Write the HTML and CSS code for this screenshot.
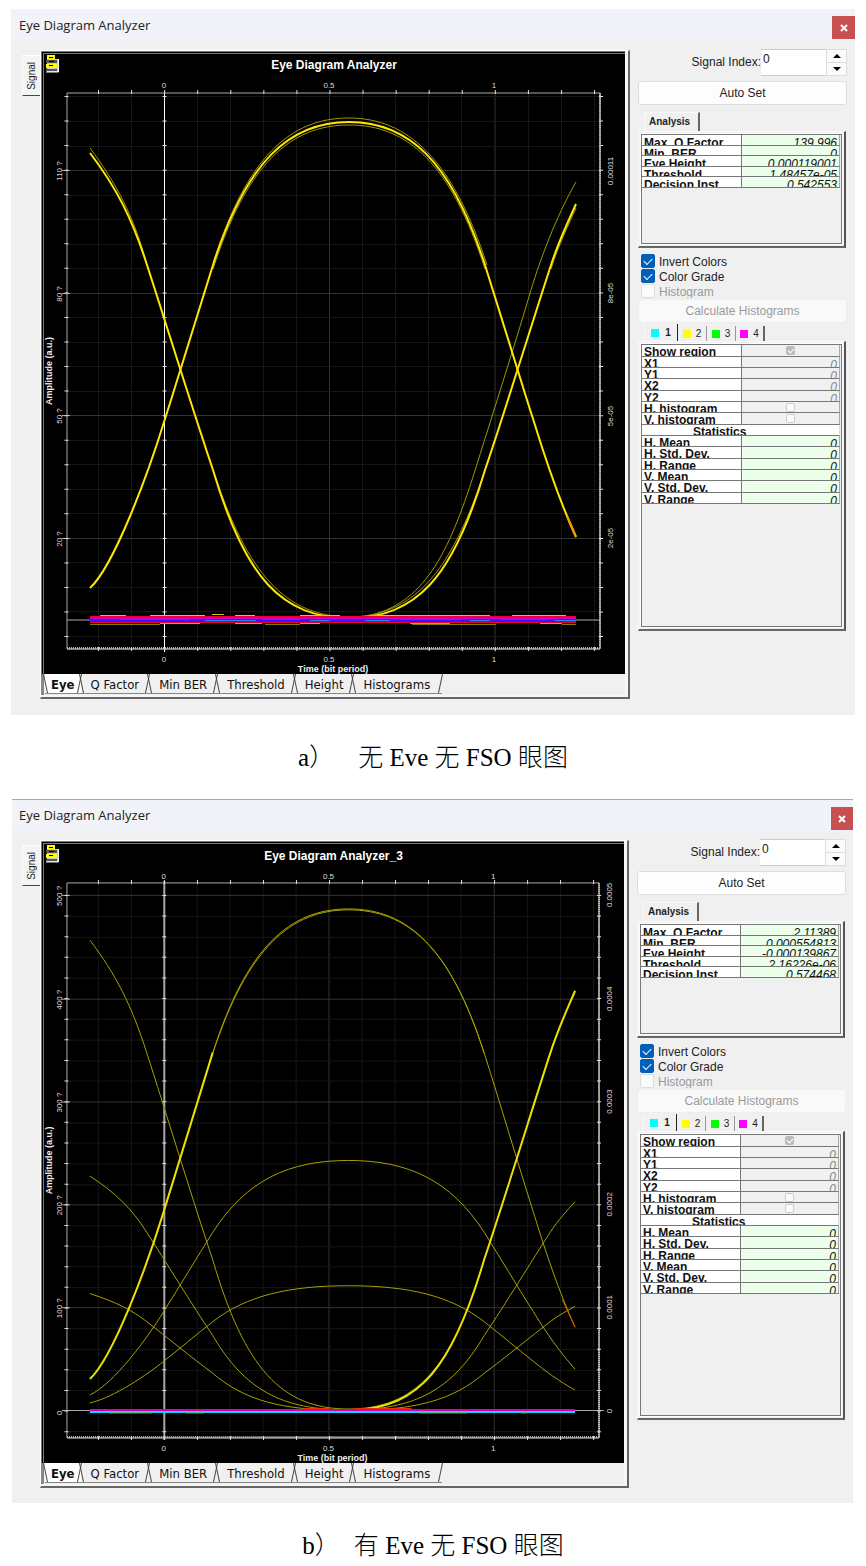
FILE: index.html
```html
<!DOCTYPE html>
<html lang="zh">
<head>
<meta charset="utf-8">
<title>Eye Diagram Analyzer</title>
<link rel="stylesheet" href="styles.css">
</head>
<body>
<main class="page">

<section class="window">
  <header class="titlebar">
    <h1 class="titlebar-text">Eye Diagram Analyzer</h1>
    <button class="close" aria-label="Close"><svg width="8" height="8" viewBox="0 0 8 8"><path d="M1 1L7 7M7 1L1 7" stroke="#fff" stroke-width="2"/></svg></button>
  </header>
  <div class="content">
    <button class="side-tab"><span class="side-tab-text">Signal</span></button>
    <div class="chart-panel">
      <div class="screen">
        <svg class="chart" viewBox="44 54 581 620">
          <defs>
            <path id="rise" d="M90 588C114 566 148 474 164 422C181 369 197 315 213 265C247 160 290 122 349 122C408 122 451 160 485 265C501 315 517 369 534 422C546 461 560 502 576 537"/>
            <path id="fall" d="M90 153C116 187 132 218 147 265C164 317 193 411 213 470C245 578 282 618 349 618C416 618 453 578 485 470C505 411 534 317 551 265C559 240 568 222 576 204"/>
            <g id="logo">
              <path d="M47 56h8v3h3v13H47z" fill="#ccc"/>
              <path d="M47 55h8v4h-8zM46 64h11v4H46z" fill="#ff0"/>
              <path d="M46 60h11v3H46zM46 69h11v2H46z" fill="#555"/>
              <path d="M49 57.500h4M49 65.500h4M49 61.500h5" stroke="#000"/>
              <path d="M58.500 59v13H46" stroke="#fff" fill="none"/>
            </g>
            <g id="columns">
              <path class="minor" d="M98.500 93V649M131.500 93V649M197.500 93V649M230.500 93V649M263.500 93V649M296.500 93V649M362.500 93V649M395.500 93V649M428.500 93V649M461.500 93V649M528.500 93V649M561.500 93V649M594.500 93V649"/>
              <path class="major" d="M329.500 93V652M495 93V652"/>
            </g>
          </defs>
          <rect x="44" y="54" width="581" height="620" fill="#000"/>
          <use href="#logo"/>
          <text class="chart-title" x="334" y="69">Eye Diagram Analyzer</text>
          <use href="#columns"/>
          <path class="minor" d="M67 96.500H600M67 121.500H600M67 146.500H600M67 195.500H600M67 219.500H600M67 244.500H600M67 268.500H600M67 317.500H600M67 342.500H600M67 366.500H600M67 391.500H600M67 440.500H600M67 464.500H600M67 489.500H600M67 513.500H600M67 562.500H600M67 587.500H600M67 611.500H600M67 636.500H600"/>
          <path class="major" d="M67 170.500H600M67 293.500H600M67 415.500H600M67 538.500H600"/>
          <path class="axis" d="M67 93H600"/>
          <path class="axis" d="M67 93V649M62 170.500H70M62 293.500H70M62 415.500H70M62 538.500H70M600 620H67"/>
          <path class="frame" d="M600 93V649H67M164.500 91V652"/>
          <path class="dots" d="M600 93V649M67 648H600"/>
          <path class="ticks" stroke-dasharray="1 23.550" d="M66.500 96V649M164.500 96V649M601 96V649"/>
          <path class="ticks" stroke-dasharray="1 32.070" d="M98 92H600M98 649H600"/>
          <g class="num">
            <text x="164" y="88">0</text><text x="329" y="88">0.5</text><text x="494" y="88">1</text>
            <text x="164" y="662">0</text><text x="329" y="662">0.5</text><text x="494" y="662">1</text>
            <text transform="translate(62 171) rotate(-90)">110 ?</text>
            <text transform="translate(62 294) rotate(-90)">80 ?</text>
            <text transform="translate(62 416) rotate(-90)">50 ?</text>
            <text transform="translate(62 539) rotate(-90)">20 ?</text>
            <text transform="translate(613 171) rotate(-90)">0.00011</text>
            <text transform="translate(613 293) rotate(-90)">8e-05</text>
            <text transform="translate(613 416) rotate(-90)">5e-05</text>
            <text transform="translate(613 538) rotate(-90)">2e-05</text>
          </g>
          <text class="axis-title" x="333" y="672">Time (bit period)</text>
          <text class="axis-title" transform="translate(52 371) rotate(-90)">Amplitude (a.u.)</text>
          <g fill="none">
            <path class="trace-dim" d="M213 269C247 164 290 125 349 125C408 125 451 164 485 269"/>
            <path class="trace-dim" d="M213 263C247 157 290 118 349 118C408 118 453 160 487 265"/>
            <path class="trace-dim" d="M90 148C116 183 134 216 147 265"/>
            <path class="trace-dim" d="M213 470C248 576 286 616 349 617C412 616 450 576 485 470M551 269C559 244 568 226 576 208"/>
            <path class="trace-dim" d="M361 617C420 608 446 560 472 480C494 410 520 328 530 293C544 247 560 210 576 182"/>
            <use href="#rise" class="trace-hot"/>
            <use href="#fall" class="trace-hot"/>
            <path stroke="#f5a000" stroke-width="2" d="M567 516L576 537"/>
          </g>
          <path stroke="#cc0" d="M100 615.500H126M212 614.500H224M300 615.500H340M400 615.500H490M512 615.500H566"/>
          <path stroke="#f00030" stroke-width="2" d="M90 617H576"/>
          <path stroke="#f0c000" d="M150 615.500H205M235 615.500H255M372 615.500H406M440 615.500H460"/>
          <path stroke="#d000d8" stroke-width="2" d="M90 619H576"/>
          <path stroke="#3018ff" stroke-width="3" d="M90 620.500H576"/>
          <path stroke="#9010ff" d="M120 619.500H190M262 619.500H300M400 619.500H462M500 619.500H548"/>
          <path stroke="#1090ff" d="M205 620.500H256M310 620.500H330M365 620.500H390M470 620.500H490M555 620.500H576"/>
          <path stroke="#f00030" d="M90 622.500H576"/>
          <path stroke="#f0a000" d="M160 623.500H200M235 623.500H262M300 623.500H320M410 623.500H450M540 623.500H562"/>
          <path stroke="#807800" d="M90 624.500H160M265 624.500H300M412 624.500H496M562 624.500H576"/>
        </svg>
      </div>
      <nav class="sheet-tabs">
        <button class="sheet active">Eye</button><button class="sheet">Q Factor</button><button class="sheet">Min BER</button><button class="sheet">Threshold</button><button class="sheet">Height</button><button class="sheet">Histograms</button>
      </nav>
    </div>
    <aside class="sidebar">
      <div class="index-row">
        <label for="index-a">Signal Index:</label>
        <input class="index-input" id="index-a" type="text" value="0">
        <div class="spinner"><button class="spin" aria-label="Up"><svg width="8" height="4" viewBox="0 0 8 4"><path d="M0 4L4 0L8 4z"/></svg></button><button class="spin" aria-label="Down"><svg width="8" height="4" viewBox="0 0 8 4"><path d="M0 0L4 4L8 0z"/></svg></button></div>
      </div>
      <button class="btn auto">Auto Set</button>
      <div class="analysis-tabs"><button class="analysis-tab">Analysis</button></div>
      <div class="panel results">
        <div class="well">
          <table class="grid results-grid">
            <tr><th><div>Max. Q Factor</div></th><td><div>139.996</div></td></tr>
            <tr><th><div>Min. BER</div></th><td><div>0</div></td></tr>
            <tr><th><div>Eye Height</div></th><td><div>0.000119001</div></td></tr>
            <tr><th><div>Threshold</div></th><td><div>1.48457e-05</div></td></tr>
            <tr><th><div>Decision Inst</div></th><td><div>0.542553</div></td></tr>
          </table>
        </div>
      </div>
      <div class="checks">
        <label class="check"><input type="checkbox" checked>Invert Colors</label>
        <label class="check"><input type="checkbox" checked>Color Grade</label>
        <label class="check off"><input type="checkbox" disabled>Histogram</label>
      </div>
      <button class="btn calc" disabled>Calculate Histograms</button>
      <div class="region-tabs">
        <button class="region active"><i class="swatch cyan"></i>1</button><button class="region"><i class="swatch yellow"></i>2</button><button class="region"><i class="swatch green"></i>3</button><button class="region"><i class="swatch magenta"></i>4</button>
      </div>
      <div class="panel regions">
        <div class="well">
          <table class="grid stats-grid">
            <tr class="dead"><th><div>Show region</div></th><td><div class="mid"><input type="checkbox" aria-label="Show region" checked disabled></div></td></tr>
            <tr class="dead"><th><div>X1</div></th><td><div>0</div></td></tr>
            <tr class="dead"><th><div>Y1</div></th><td><div>0</div></td></tr>
            <tr class="dead"><th><div>X2</div></th><td><div>0</div></td></tr>
            <tr class="dead"><th><div>Y2</div></th><td><div>0</div></td></tr>
            <tr class="dead"><th><div>H. histogram</div></th><td><div class="mid"><input type="checkbox" aria-label="H. histogram" disabled></div></td></tr>
            <tr class="dead"><th><div>V. histogram</div></th><td><div class="mid"><input type="checkbox" aria-label="V. histogram" disabled></div></td></tr>
            <tr><th class="heading" colspan="2"><div>Statistics</div></th></tr>
            <tr><th><div>H. Mean</div></th><td><div>0</div></td></tr>
            <tr><th><div>H. Std. Dev.</div></th><td><div>0</div></td></tr>
            <tr><th><div>H. Range</div></th><td><div>0</div></td></tr>
            <tr><th><div>V. Mean</div></th><td><div>0</div></td></tr>
            <tr><th><div>V. Std. Dev.</div></th><td><div>0</div></td></tr>
            <tr><th><div>V. Range</div></th><td><div>0</div></td></tr>
          </table>
        </div>
      </div>
    </aside>
  </div>
</section>
<p class="caption first"><span>a<span class="han">）</span></span><span><span class="han">无</span> Eve <span class="han">无</span> FSO <span class="han">眼图</span></span></p>

<section class="window second">
  <header class="titlebar">
    <h1 class="titlebar-text">Eye Diagram Analyzer</h1>
    <button class="close" aria-label="Close"><svg width="8" height="8" viewBox="0 0 8 8"><path d="M1 1L7 7M7 1L1 7" stroke="#fff" stroke-width="2"/></svg></button>
  </header>
  <div class="content">
    <button class="side-tab"><span class="side-tab-text">Signal</span></button>
    <div class="chart-panel">
      <div class="screen">
        <svg class="chart" viewBox="44 54 581 620">
          <rect x="44" y="54" width="581" height="620" fill="#000"/>
          <use href="#logo"/>
          <text class="chart-title" x="334" y="70">Eye Diagram Analyzer_3</text>
          <use href="#columns"/>
          <path class="minor" d="M67 126.500H600M67 147.500H600M67 167.500H600M67 188.500H600M67 229.500H600M67 250.500H600M67 271.500H600M67 291.500H600M67 333.500H600M67 353.500H600M67 374.500H600M67 395.500H600M67 436.500H600M67 457.500H600M67 477.500H600M67 498.500H600M67 539.500H600M67 560.500H600M67 581.500H600M67 601.500H600M67 642.500H600"/>
          <path class="major" d="M67 105.500H600M67 209.500H600M67 312.500H600M67 415.500H600M67 518.500H600"/>
          <path class="axis" d="M67 93H600"/>
          <path class="axis" d="M67 93V649M62 105.500H70M62 209.500H70M62 312.500H70M62 415.500H70M62 518.500H70M62 621.500H605"/>
          <path class="frame" d="M600 93V649H67"/>
          <path class="axis" stroke-width="2" d="M164.500 91V651"/>
          <path class="dots" d="M600 93V649M67 648H600"/>
          <path class="ticks" stroke-dasharray="1 19.660" d="M66.500 105V648M164.500 105V648M600 105V648"/>
          <path class="ticks" stroke-dasharray="1 32.070" d="M98 92H600M98 649H600"/>
          <g class="num">
            <text x="164" y="89">0</text><text x="329" y="89">0.5</text><text x="494" y="89">1</text>
            <text x="164" y="662">0</text><text x="329" y="662">0.5</text><text x="494" y="662">1</text>
            <text transform="translate(62 106) rotate(-90)">500 ?</text>
            <text transform="translate(62 210) rotate(-90)">400 ?</text>
            <text transform="translate(62 313) rotate(-90)">300 ?</text>
            <text transform="translate(62 416) rotate(-90)">200 ?</text>
            <text transform="translate(62 519) rotate(-90)">100 ?</text>
            <text transform="translate(62 624) rotate(-90)">0</text>
            <text transform="translate(613 105) rotate(-90)">0.0005</text>
            <text transform="translate(613 209) rotate(-90)">0.0004</text>
            <text transform="translate(613 312) rotate(-90)">0.0003</text>
            <text transform="translate(613 415) rotate(-90)">0.0002</text>
            <text transform="translate(613 518) rotate(-90)">0.0001</text>
            <text transform="translate(613 622) rotate(-90)">0</text>
          </g>
          <text class="axis-title" x="333" y="672">Time (bit period)</text>
          <text class="axis-title" transform="translate(52 371) rotate(-90)">Amplitude (a.u.)</text>
          <g fill="none">
            <use href="#rise" class="trace-thin" transform="translate(0 622) scale(1 .252) translate(0 -620)"/>
            <use href="#fall" class="trace-thin" transform="translate(0 622) scale(1 .252) translate(0 -620)"/>
            <use href="#rise" class="trace-thin" transform="translate(0 622) scale(1 .504) translate(0 -620)"/>
            <use href="#fall" class="trace-thin" transform="translate(0 622) scale(1 .504) translate(0 -620)"/>
            <use href="#rise" class="trace-thin" transform="translate(0 622) scale(1 1.010) translate(0 -620)"/>
            <use href="#fall" class="trace-thin" transform="translate(0 622) scale(1 1.010) translate(0 -620)"/>
            <path class="trace-thin" d="M213 264C248 157 292 120 349 120C408 120 451 157 485 264"/>
            <path class="trace-main" d="M90 590C114 567 148 474 164 422C181 368 197 314 213 263"/>
            <path class="trace-main" d="M355 621C420 618 453 579 485 470C505 411 534 316 551 264C559 239 568 220 576 201"/>
            <path stroke="#d06000" d="M563 510L576 538"/>
            <path stroke="#f03000" stroke-width="2" d="M304 620H330M355 620H412"/>
          </g>
          <path stroke="#d000c0" stroke-width="2" d="M90 621H576"/>
          <path stroke="#00d8ff" stroke-width="2" d="M90 623H576"/>
          <path stroke="#a0a000" d="M110 624H152M186 624H204M420 624H468M522 624H528"/>
        </svg>
      </div>
      <nav class="sheet-tabs">
        <button class="sheet active">Eye</button><button class="sheet">Q Factor</button><button class="sheet">Min BER</button><button class="sheet">Threshold</button><button class="sheet">Height</button><button class="sheet">Histograms</button>
      </nav>
    </div>
    <aside class="sidebar">
      <div class="index-row">
        <label for="index-b">Signal Index:</label>
        <input class="index-input" id="index-b" type="text" value="0">
        <div class="spinner"><button class="spin" aria-label="Up"><svg width="8" height="4" viewBox="0 0 8 4"><path d="M0 4L4 0L8 4z"/></svg></button><button class="spin" aria-label="Down"><svg width="8" height="4" viewBox="0 0 8 4"><path d="M0 0L4 4L8 0z"/></svg></button></div>
      </div>
      <button class="btn auto">Auto Set</button>
      <div class="analysis-tabs"><button class="analysis-tab">Analysis</button></div>
      <div class="panel results">
        <div class="well">
          <table class="grid results-grid">
            <tr><th><div>Max. Q Factor</div></th><td><div>2.11389</div></td></tr>
            <tr><th><div>Min. BER</div></th><td><div>0.000554813</div></td></tr>
            <tr><th><div>Eye Height</div></th><td><div>-0.000139867</div></td></tr>
            <tr><th><div>Threshold</div></th><td><div>2.16226e-06</div></td></tr>
            <tr><th><div>Decision Inst</div></th><td><div>0.574468</div></td></tr>
          </table>
        </div>
      </div>
      <div class="checks">
        <label class="check"><input type="checkbox" checked>Invert Colors</label>
        <label class="check"><input type="checkbox" checked>Color Grade</label>
        <label class="check off"><input type="checkbox" disabled>Histogram</label>
      </div>
      <button class="btn calc" disabled>Calculate Histograms</button>
      <div class="region-tabs">
        <button class="region active"><i class="swatch cyan"></i>1</button><button class="region"><i class="swatch yellow"></i>2</button><button class="region"><i class="swatch green"></i>3</button><button class="region"><i class="swatch magenta"></i>4</button>
      </div>
      <div class="panel regions">
        <div class="well">
          <table class="grid stats-grid">
            <tr class="dead"><th><div>Show region</div></th><td><div class="mid"><input type="checkbox" aria-label="Show region" checked disabled></div></td></tr>
            <tr class="dead"><th><div>X1</div></th><td><div>0</div></td></tr>
            <tr class="dead"><th><div>Y1</div></th><td><div>0</div></td></tr>
            <tr class="dead"><th><div>X2</div></th><td><div>0</div></td></tr>
            <tr class="dead"><th><div>Y2</div></th><td><div>0</div></td></tr>
            <tr class="dead"><th><div>H. histogram</div></th><td><div class="mid"><input type="checkbox" aria-label="H. histogram" disabled></div></td></tr>
            <tr class="dead"><th><div>V. histogram</div></th><td><div class="mid"><input type="checkbox" aria-label="V. histogram" disabled></div></td></tr>
            <tr><th class="heading" colspan="2"><div>Statistics</div></th></tr>
            <tr><th><div>H. Mean</div></th><td><div>0</div></td></tr>
            <tr><th><div>H. Std. Dev.</div></th><td><div>0</div></td></tr>
            <tr><th><div>H. Range</div></th><td><div>0</div></td></tr>
            <tr><th><div>V. Mean</div></th><td><div>0</div></td></tr>
            <tr><th><div>V. Std. Dev.</div></th><td><div>0</div></td></tr>
            <tr><th><div>V. Range</div></th><td><div>0</div></td></tr>
          </table>
        </div>
      </div>
    </aside>
  </div>
</section>
<p class="caption last"><span>b<span class="han">）</span></span><span><span class="han">有</span> Eve <span class="han">无</span> FSO <span class="han">眼图</span></span></p>

</main>
</body>
</html>
```
FILE: styles.css
```css
* { box-sizing: border-box; }
body {
  margin: 0;
  background: #fff;
  color: #222;
  font: 12px/14px "Liberation Sans", Arial, sans-serif;
}
button, input { font: inherit; color: inherit; margin: 0; padding: 0; border: 0; }
.page { padding: 9px 11px 5px; }

/* Window frame */
.window { background: #f0f0f0; padding-bottom: 16px; }
.window.second { margin: 0 2px 0 1px; padding-bottom: 15px; }
.titlebar { display: flex; justify-content: space-between; height: 32px; background: #f1f3f9; }
.second .titlebar { border-top: 1px solid #aaa; }
.titlebar-text {
  margin: 0;
  padding-left: 8px;
  font: 13px/32px "Open Sans", "Noto Sans", sans-serif;
}
.second .titlebar-text { padding-left: 7px; line-height: 30px; }
.close {
  display: flex; align-items: center; justify-content: center;
  width: 23px; height: 23px; margin-top: 7px;
  background: #c75050;
}
.second .close { width: 22px; }
.content { display: flex; align-items: flex-start; padding: 8px 8px 0 11px; }
.second .content { padding: 8px 7px 0 10px; }

/* Side tab */
.side-tab {
  display: flex; align-items: center; justify-content: center;
  width: 18px; height: 41px; margin-top: 6px;
  background: #f4f4f4;
  border-left: 1px solid #fff; border-top: 1px solid #fff; border-bottom: 1px solid #444;
  font-size: 10px;
}
.side-tab-text { writing-mode: vertical-rl; transform: rotate(180deg); }

/* Chart */
.chart-panel {
  flex: 1; min-width: 0; margin-top: 1px;
  border: solid; border-width: 1px 2px 2px 1px; border-color: #fff #666 #666 #fff;
  padding: 0 3px 2px 0;
  background: #f6f6f6;
}
.screen { background: #000; border: double #777; border-width: 3px 0 0 3px; }
.chart { display: block; width: 100%; height: auto; font-family: "Liberation Sans", Arial, sans-serif; }
.chart text { text-anchor: middle; fill: #ddd; }
.chart .chart-title { font-size: 12px; font-weight: bold; fill: #fff; }
.chart .num { font-size: 8px; }
.chart .axis-title { font-size: 9px; font-weight: bold; fill: #eee; }
.minor { stroke: #161616; }
.major { stroke: #333; }
.axis { stroke: #aaa; fill: none; }
.frame { stroke: #fff; fill: none; }
.dots { stroke: #bbb; stroke-width: 2; stroke-dasharray: 1 1; fill: none; }
.ticks { stroke: #ddd; stroke-width: 4; fill: none; }
.trace-hot { stroke: #ffe800; stroke-width: 2; }
.trace-dim { stroke: #a09800; }
.trace-main { stroke: #e8e000; stroke-width: 2; }
.trace-thin { stroke: #a8a000; }
#rise, #fall { vector-effect: non-scaling-stroke; }

/* Sheet tabs */
.sheet-tabs { display: flex; height: 21px; padding-left: 1px; background: #f0f0f0; border-left: 3px solid #888; }
.sheet {
  position: relative;
  height: 20px; padding: 1px 10px 0;
  background: none;
  border-bottom: 1px solid #888;
  font: 13px/19px "DejaVu Sans Condensed", "Noto Sans", sans-serif;
  color: #111;
}
.sheet::before, .sheet::after {
  content: ""; position: absolute; top: 0; bottom: 0; width: 1px; background: #444;
}
.sheet::before { left: 0; transform: skewX(12deg); }
.sheet::after { right: 1px; transform: skewX(-12deg); }
.sheet.active { padding: 1px 6px 0; background: #fff; font-weight: bold; }
.sheet:last-child { padding-right: 12px; }

/* Sidebar */
.sidebar { display: flex; flex-direction: column; width: 210px; margin-left: 7px; padding: 0 0 0 1px; }
.index-row { display: flex; justify-content: flex-end; height: 27px; line-height: 27px; }
.index-input {
  width: 65px; height: 27px; padding: 0 0 6px 2px;
  background: #fff; border: solid #ccc; border-width: 1px 0;
}
.spinner { display: flex; flex-direction: column; gap: 1px; width: 21px; padding: 1px; background: #ddd; }
.spin { display: flex; align-items: center; justify-content: center; flex: 1; background: #fbfbfb; }
.btn { width: 100%; background: #fdfdfd; border: 1px solid #ddd; border-radius: 3px; }
.btn.auto { height: 24px; margin-top: 5px; }
.btn.calc { height: 24px; margin-top: 1px; background: #f9f9f9; border-color: #eee; color: #999; }
.analysis-tabs { display: flex; height: 19px; margin-top: 7px; padding-left: 6px; }
.analysis-tab {
  padding: 0 8px 0 4px;
  border: solid; border-width: 1px 2px 0 1px; border-color: #fafafa #666 #fafafa #fafafa;
  background: #f0f0f0;
  font-size: 10px; font-weight: bold;
}
.panel {
  display: flex; width: 208px; padding: 2px;
  border: solid; border-width: 1px 2px 2px 1px; border-color: #fafafa #555 #666 #fafafa;
}
.results { height: 117px; }
.regions { height: 290px; }
.second .regions { height: 289px; }
.well { flex: 1; min-width: 0; padding-right: 1px; border: 1px solid #777; box-shadow: 0 0 0 1px #fff; }

.grid { width: 100%; table-layout: fixed; border-spacing: 0; color: #111; }
.grid th, .grid td { padding: 0; border-bottom: 1px solid #777; }
.grid th { width: 100px; background: #fff; text-align: left; border-right: 1px solid #777; }
.grid td { background: #ebffeb; text-align: right; font-style: italic; border-right: 1px solid #aaa; }
.grid div { height: 10px; padding: 0 2px; line-height: 14px; overflow: hidden; }
.grid th.heading { border-right-color: #ddd; }
.grid .heading div { padding-left: 51px; }
.results-grid div { line-height: 16px; }
.results-grid tr:nth-child(even) div { height: 9px; }
.stats-grid tr:nth-child(3n+1) div { height: 11px; }
.stats-grid td div { line-height: 16px; }
.dead td { background: #f0f0f0; color: #888; }
.grid .mid { display: flex; justify-content: center; align-items: center; }

/* Check boxes */
.checks { margin-top: 6px; }
.check { display: flex; gap: 4px; height: 15px; padding-left: 3px; line-height: 17px; overflow: hidden; }
.check.off { color: #999; height: 14px; }
input[type="checkbox"] {
  appearance: none;
  display: flex; align-items: center; justify-content: center; flex: none;
  width: 14px; height: 14px; margin: 0;
  background: #fbfbfb; border: 1px solid #ddd; border-radius: 2px;
}
input[type="checkbox"]:checked { background: #005fb8; border-color: #005fb8; }
input[type="checkbox"]:checked::before {
  content: ""; width: 7px; height: 4px; margin-bottom: 2px;
  border: solid #fff; border-width: 0 0 1px 1px; transform: rotate(-45deg);
}
.grid input[type="checkbox"] { width: 9px; height: 9px; border-color: #ccc; }
.grid input[type="checkbox"]:checked { background: #bbb; border-color: #bbb; }
.grid input[type="checkbox"]:checked::before { width: 5px; height: 3px; }

.region-tabs { display: flex; align-items: flex-end; height: 17px; margin-top: 1px; padding-left: 6px; }
.region {
  display: flex; align-items: center; justify-content: center; gap: 5px;
  width: 29px; height: 15px; background: none;
  border-right: 1px solid #999; font-size: 10px;
}
.region.active { width: 34px; height: 17px; gap: 6px; border-right: 1px solid #222; border-left: 1px solid #fafafa; font-weight: bold; }
.region:last-child { border-right: 2px solid #666; }
.swatch { width: 8px; height: 8px; }
.cyan { background: #0ff; }
.yellow { background: #ff0; }
.green { background: #0f0; }
.magenta { background: #f0f; }

/* Captions */
.caption {
  display: flex; justify-content: center;
  margin: 27px 0 25px;
  color: #000;
  font: 400 25px/32px "Liberation Serif", "Times New Roman", serif;
}
.han { font-family: "Noto Sans CJK SC", sans-serif; font-weight: 300; line-height: 1; }
.caption.first { gap: 24px; }
.caption.last { gap: 14px; margin: 27px 0 0; }
```
